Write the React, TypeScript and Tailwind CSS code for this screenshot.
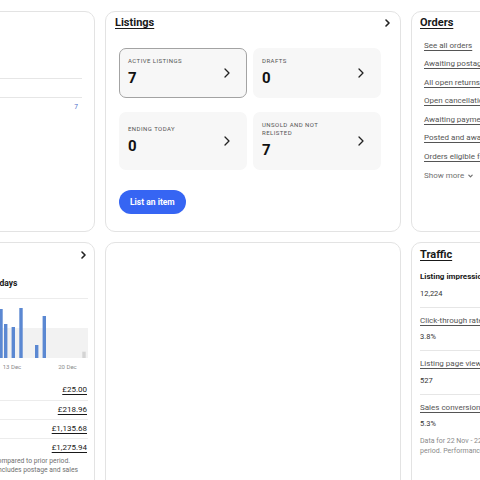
import clsx from 'clsx';

const card = 'rounded-[10px] border border-[#e3e3e3] bg-white';

function ChevronRight({ className }: { className?: string }) {
  return (
    <svg viewBox="0 0 6 10" className={className} fill="none" stroke="currentColor" strokeWidth={1.3} strokeLinecap="round" strokeLinejoin="round">
      <polyline points="1,1 5,5 1,9" />
    </svg>
  );
}

function SmallChevron({ className }: { className?: string }) {
  return (
    <svg viewBox="0 0 5 8" className={className} fill="none" stroke="currentColor" strokeWidth={1.6} strokeLinecap="round" strokeLinejoin="round">
      <polyline points="1,1 4,4 1,7" />
    </svg>
  );
}

function Tile({ label, value, active }: { label: string; value: string; active?: boolean }) {
  return (
    <div
      className={clsx(
        'flex items-center justify-between rounded-[7px] border bg-[#f7f7f7] pl-[8px] pr-[16px]',
        active ? 'border-[#a3a3a3]' : 'border-transparent'
      )}
    >
      <div className="flex flex-col gap-[5px] pb-[4px]">
        <span className="max-w-[80px] text-[6px] leading-[8px] uppercase tracking-[0.45px] text-[#555]">{label}</span>
        <span className="text-[15px] leading-[16px] font-bold text-[#111]">{value}</span>
      </div>
      <ChevronRight className="w-[6px] h-[10px] text-[#222]" />
    </div>
  );
}

function TasksCard() {
  return (
    <div className={clsx(card, 'pt-[4px]')}>
      <h2 className="pl-[8px] text-[11px] leading-[14px] font-bold underline">Tasks</h2>
      <div className="mt-[48px] ml-[13px] mr-[12px] text-[6.5px] text-[#555]">
        <div className="h-[19px] border-t border-[#e6e6e6] leading-[18px]">Type</div>
        <div className="flex h-[19px] justify-between border-t border-[#e6e6e6] leading-[18px]">
          <span>Drafts to finish</span>
          <span className="pr-[4px] text-[#4d6fc9]">7</span>
        </div>
      </div>
    </div>
  );
}

function ListingsCard() {
  return (
    <div className={clsx(card, 'pt-[4px]')}>
      <div className="flex items-center justify-between pl-[9px] pr-[10px]">
        <h2 className="text-[11px] leading-[14px] font-bold underline underline-offset-[1.5px]">Listings</h2>
        <SmallChevron className="w-[5px] h-[8px] text-[#222]" />
      </div>
      <div className="mt-[18px] ml-[13px] grid grid-cols-[128px_128px] grid-rows-[50px_58px] gap-x-[6px] gap-y-[14px]">
        <Tile label="Active listings" value="7" active />
        <Tile label="Drafts" value="0" />
        <Tile label="Ending today" value="0" />
        <Tile label="Unsold and not relisted" value="7" />
      </div>
      <button className="mt-[20px] ml-[13px] h-[24px] rounded-full bg-[#3665f3] px-[11px] text-[8.5px] font-bold text-white">
        List an item
      </button>
    </div>
  );
}

const orderLinks = [
  'See all orders',
  'Awaiting postage',
  'All open returns/replacements',
  'Open cancellations',
  'Awaiting payment',
  'Posted and awaiting feedback',
  'Orders eligible for refund',
];

function OrdersCard() {
  return (
    <div className={clsx(card, 'pt-[4px] pl-[8px]')}>
      <div className="flex items-center justify-between pr-[10px]">
        <h2 className="text-[11px] leading-[14px] font-bold underline underline-offset-[1.5px]">Orders</h2>
        <SmallChevron className="w-[5px] h-[8px] text-[#222]" />
      </div>
      <ul className="mt-[6.5px] pl-[4px] text-[8px]">
        {orderLinks.map((l) => (
          <li key={l} className="h-[18.6px] leading-[18.6px] text-[#555] underline underline-offset-[1.5px]">
            {l}
          </li>
        ))}
        <li className="flex h-[18.6px] items-center gap-[4px] text-[#707070]">
          Show more
          <svg viewBox="0 0 6 4" className="w-[5px] h-[4px]" fill="none" stroke="currentColor" strokeWidth={1.5} strokeLinecap="round" strokeLinejoin="round">
            <polyline points="1,1 3,3 5,1" />
          </svg>
        </li>
      </ul>
    </div>
  );
}

const bars = [
  { x: -0.7, top: 308 },
  { x: 4.0, top: 323 },
  { x: 11.6, top: 326 },
  { x: 19.3, top: 307 },
  { x: 35.0, top: 344 },
  { x: 42.6, top: 315 },
];

const salesRows = [
  { label: 'Today', value: '£25.00' },
  { label: 'Last 7 days', value: '£218.96' },
  { label: 'Last 31 days', value: '£1,135.68' },
  { label: 'Last 90 days', value: '£1,275.94' },
];

function SalesCard() {
  return (
    <div className={clsx(card, 'pt-[5px]')}>
      <div className="flex items-center justify-between pl-[13px] pr-[8px]">
        <h2 className="text-[11px] leading-[14px] font-bold underline">Sales</h2>
        <SmallChevron className="w-[5px] h-[8px] text-[#222]" />
      </div>
      <div className="mt-[14.5px] h-[12px] pr-[76.5px] text-right text-[8.5px] leading-[12px] font-bold">Last 31 days</div>
      <div className="mt-[9px] ml-[13px] mr-[6px] border-t border-[#ececec]">
        <svg width={275} height={76} viewBox="-187 298 275 76" className="block">
          <rect x={-187} y={327} width={275} height={30} fill="#f2f2f2" />
          {bars.map((b) => (
            <rect key={b.x} x={b.x} y={b.top} width={3.4} height={357 - b.top} fill="#5b88d2" />
          ))}
          <rect x={82.3} y={350.7} width={3.4} height={6.3} fill="#d4d4d4" />
          <g fontSize={6} fill="#8c8c8c" textAnchor="middle">
            <text x={-95} y={367.7}>29 Nov</text>
            <text x={-41.5} y={367.7}>6 Dec</text>
            <text x={12} y={367.7}>13 Dec</text>
            <text x={67.5} y={367.7}>20 Dec</text>
          </g>
        </svg>
      </div>
      <div className="mt-[6.5px] ml-[13px] mr-[6px] text-[8px]">
        {salesRows.map((r, i) => (
          <div
            key={r.label}
            className={clsx('flex h-[19px] justify-between leading-[18px]', i > 0 && 'border-t border-[#ececec]')}
          >
            <span className="text-[#555]">{r.label}</span>
            <span className="pr-[1px] underline underline-offset-[1.5px]">{r.value}</span>
          </div>
        ))}
        <p className="pr-[18px] text-right text-[6.75px] leading-[9px] text-[#707070]">Percentages compared to prior period.</p>
        <p className="pr-[10px] text-right text-[6.75px] leading-[9px] text-[#707070]">Sales total includes postage and sales</p>
      </div>
    </div>
  );
}

const traffic = [
  { label: 'Listing impressions', value: '12,224', bold: true },
  { label: 'Click-through rate', value: '3.8%' },
  { label: 'Listing page views', value: '527' },
  { label: 'Sales conversion rate', value: '5.3%' },
];

function TrafficCard() {
  return (
    <div className={clsx(card, 'pt-[5px] pl-[8px]')}>
      <h2 className="text-[11px] leading-[14px] font-bold underline underline-offset-[1.5px]">Traffic</h2>
      <div className="mt-[2px]">
        {traffic.map((t, i) => (
          <div
            key={t.label}
            className={clsx('pt-[7px] pb-[7px]', i < traffic.length - 1 && 'border-b border-[#e6e6e6]')}
          >
            <div
              className={clsx(
                'text-[8px] leading-[12px]',
                t.bold ? 'font-bold text-[#191919]' : 'text-[#555] underline underline-offset-[1.5px]'
              )}
            >
              {t.label}
            </div>
            <div className="mt-[4.5px] text-[7.5px] leading-[12px] text-[#333]">{t.value}</div>
          </div>
        ))}
      </div>
      <p className="text-[7px] leading-[9.5px] text-[#8a8a8a]">
        Data for 22 Nov - 22 Dec compared to prior
        <br />
        period. Performance data updates daily.
      </p>
    </div>
  );
}

export default function App() {
  return (
    <div className="h-[480px] w-[480px] overflow-hidden bg-white [font-family:Roboto,Arial,sans-serif] text-[#191919]">
      <div className="ml-[-201px] mt-[11px] grid grid-cols-[296px_296px_296px] grid-rows-[221px_300px] gap-[10px]">
        <TasksCard />
        <ListingsCard />
        <OrdersCard />
        <SalesCard />
        <div className={card} />
        <TrafficCard />
      </div>
    </div>
  );
}
